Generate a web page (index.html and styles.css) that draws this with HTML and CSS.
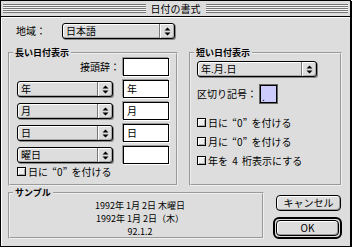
FILE: index.html
```html
<!DOCTYPE html>
<html lang="ja">

<head>
    <meta charset="UTF-8">
    <title>日付の書式</title>
    <link rel="stylesheet" href="styles.css">
</head>

<body>
    <div class="window">
        <div class="titlebar">
            <span class="stripes"></span>
            <span class="title">日付の書式</span>
            <span class="stripes"></span>
        </div>

        <div class="content">
            <div class="region-row">
                <span class="region-label">地域：</span>
                <div class="popup region-popup">
                    <span class="popup-text">日本語</span>
                    <span class="popup-arrows"><svg width="7" height="9" viewBox="0 0 7 9"><path d="M3.5 0.5L6.5 3.5H0.5Z M3.5 8.5L6.5 5.5H0.5Z" /></svg></span>
                </div>
            </div>

            <div class="groups">
                <fieldset class="group long-group">
                    <legend>長い日付表示</legend>
                    <div class="long-body">
                        <div class="row prefix-row">
                            <span class="prefix-label">接頭辞：</span>
                            <div class="field"></div>
                        </div>
                        <div class="row">
                            <div class="popup part-popup">
                                <span class="popup-text">年</span>
                                <span class="popup-arrows"><svg width="7" height="9" viewBox="0 0 7 9"><path d="M3.5 0.5L6.5 3.5H0.5Z M3.5 8.5L6.5 5.5H0.5Z" /></svg></span>
                            </div>
                            <div class="field">年</div>
                        </div>
                        <div class="row">
                            <div class="popup part-popup">
                                <span class="popup-text">月</span>
                                <span class="popup-arrows"><svg width="7" height="9" viewBox="0 0 7 9"><path d="M3.5 0.5L6.5 3.5H0.5Z M3.5 8.5L6.5 5.5H0.5Z" /></svg></span>
                            </div>
                            <div class="field">月</div>
                        </div>
                        <div class="row">
                            <div class="popup part-popup">
                                <span class="popup-text">日</span>
                                <span class="popup-arrows"><svg width="7" height="9" viewBox="0 0 7 9"><path d="M3.5 0.5L6.5 3.5H0.5Z M3.5 8.5L6.5 5.5H0.5Z" /></svg></span>
                            </div>
                            <div class="field">日</div>
                        </div>
                        <div class="row">
                            <div class="popup part-popup">
                                <span class="popup-text">曜日</span>
                                <span class="popup-arrows"><svg width="7" height="9" viewBox="0 0 7 9"><path d="M3.5 0.5L6.5 3.5H0.5Z M3.5 8.5L6.5 5.5H0.5Z" /></svg></span>
                            </div>
                            <div class="field"></div>
                        </div>
                        <label class="check long-check"><span class="box"></span>日に “0” を付ける</label>
                    </div>
                </fieldset>

                <fieldset class="group short-group">
                    <legend>短い日付表示</legend>
                    <div class="short-body">
                        <div class="popup order-popup">
                            <span class="popup-text">年.月.日</span>
                            <span class="popup-arrows"><svg width="7" height="9" viewBox="0 0 7 9"><path d="M3.5 0.5L6.5 3.5H0.5Z M3.5 8.5L6.5 5.5H0.5Z" /></svg></span>
                        </div>
                        <div class="sep-row">
                            <span>区切り記号：</span>
                            <div class="field sep-field">.</div>
                        </div>
                        <label class="check short-check"><span class="box"></span>日に “0” を付ける</label>
                        <label class="check short-check"><span class="box"></span>月に “0” を付ける</label>
                        <label class="check short-check"><span class="box"></span>年を 4 桁表示にする</label>
                    </div>
                </fieldset>
            </div>

            <div class="bottom-row">
                <fieldset class="group sample-group">
                    <legend>サンプル</legend>
                    <div class="sample-body">
                        <div>1992年 1月 2日 木曜日</div>
                        <div>1992年 1月 2日（木）</div>
                        <div>92.1.2</div>
                    </div>
                </fieldset>
                <div class="buttons">
                    <button class="btn cancel">キャンセル</button>
                    <div class="default-ring">
                        <button class="btn ok">OK</button>
                    </div>
                </div>
            </div>
        </div>
    </div>
</body>

</html>
```

FILE: styles.css
```css
* {
    margin: 0;
    padding: 0;
    box-sizing: border-box;
}

body {
    background: #fff;
    font-family: "Noto Sans CJK JP", "Noto Sans", sans-serif;
    font-size: 10px;
    line-height: 12px;
    color: #000;
}

.window {
    width: 351px;
    height: 247px;
    border: 1px solid #000;
    box-shadow: 1px 1px 0 #000;
    background: #dddddd;
    display: flex;
    flex-direction: column;
}

.titlebar {
    height: 16px;
    border-bottom: 1px solid #000;
    padding: 0 2px;
    display: flex;
    align-items: center;
    background: #dddddd;
}

.stripes {
    flex: 1;
    height: 9px;
    background: repeating-linear-gradient(to bottom, #777 0 1px, #f4f4f4 1px 2px);
}

.title {
    padding: 0 5px;
}

.content {
    flex: 1;
    padding: 6px 7px 0 7px;
    box-shadow: inset 1px 1px 0 #fff;
}

/* popup menus */
.popup {
    height: 16px;
    display: flex;
    align-items: center;
    border: 1px solid #000;
    border-radius: 3px;
    background: #dddddd;
    box-shadow: inset 1px 1px 0 #fff, inset -1px -1px 0 #aaa, 1px 1px 0 #888;
}

.popup-text {
    flex: 1;
    padding-left: 3px;
    white-space: nowrap;
}

.popup-arrows {
    width: 15px;
    height: 14px;
    display: flex;
    align-items: center;
    justify-content: center;
    border-left: 1px solid #777;
    box-shadow: inset 1px 0 0 #fff;
}

.popup-arrows svg {
    fill: #000;
}

/* text fields */
.field {
    height: 18px;
    width: 46px;
    border: 1px solid #000;
    background: #fff;
    padding-left: 3px;
    line-height: 16px;
    box-shadow: -1px -1px 0 #999, 1px 1px 0 #fff;
}

.region-row {
    display: flex;
    align-items: center;
}

.region-label {
    width: 46px;
    margin-left: 8px;
}

.region-popup {
    width: 113px;
}

/* group boxes */
.groups {
    display: flex;
    gap: 11px;
    margin-top: 8px;
}

.group {
    border: 2px groove #eeeeee;
    min-width: 0;
}

.group legend {
    font-size: 9px;
    font-weight: bold;
    padding: 0 2px;
    margin-left: 3px;
}

.long-group {
    width: 170px;
    height: 139px;
}

.short-group {
    width: 153px;
    height: 139px;
}

.long-body {
    margin-top: -1px;
    padding: 0 7px;
    display: flex;
    flex-direction: column;
    gap: 4px;
}

.row {
    height: 18px;
    display: flex;
    align-items: center;
    justify-content: space-between;
}

.prefix-row {
    justify-content: flex-end;
    gap: 3px;
}

.part-popup {
    width: 96px;
}

.check {
    display: flex;
    align-items: center;
    gap: 2px;
    height: 11px;
    white-space: nowrap;
    word-spacing: 2px;
}

.long-check {
    margin-top: -2px;
}

.box {
    width: 9px;
    height: 9px;
    border: 1px solid #000;
    background: #eeeeee;
    box-shadow: inset 1px 1px 0 #fff, inset -1px -1px 0 #aaa;
}

.short-body {
    padding: 2px 6px 0 6px;
    display: flex;
    flex-direction: column;
}

.order-popup {
    width: 120px;
}

.sep-row {
    margin-top: 8px;
    height: 18px;
    display: flex;
    align-items: center;
    gap: 3px;
}

.sep-field {
    width: 17px;
    padding-left: 1px;
    line-height: 22px;
    background: #ccccff;
    box-shadow: 0 0 0 1px #666;
}

.short-check {
    height: 19px;
}

.sep-row + .short-check {
    margin-top: 10px;
}

/* bottom row */
.bottom-row {
    display: flex;
    gap: 9px;
    margin-top: 1px;
}

.sample-group {
    width: 256px;
    height: 52px;
}

.sample-body {
    font-size: 9px;
    line-height: 13px;
    text-align: center;
    padding-left: 8px;
}

.buttons {
    width: 70px;
    display: flex;
    flex-direction: column;
}

.btn {
    font-family: inherit;
    font-size: 10px;
    line-height: 12px;
    color: #000;
    border: 1px solid #000;
    border-radius: 4px;
    background: #dddddd;
    box-shadow: inset 1px 1px 0 #fff, inset -1px -1px 0 #999;
}

.cancel {
    width: 65px;
    height: 16px;
    margin: 8px 0 0 3px;
}

.default-ring {
    margin-top: 6px;
    width: 69px;
    height: 22px;
    border: 2px solid #000;
    border-radius: 6px;
    padding: 1px;
    display: flex;
}

.ok {
    flex: 1;
}
```
